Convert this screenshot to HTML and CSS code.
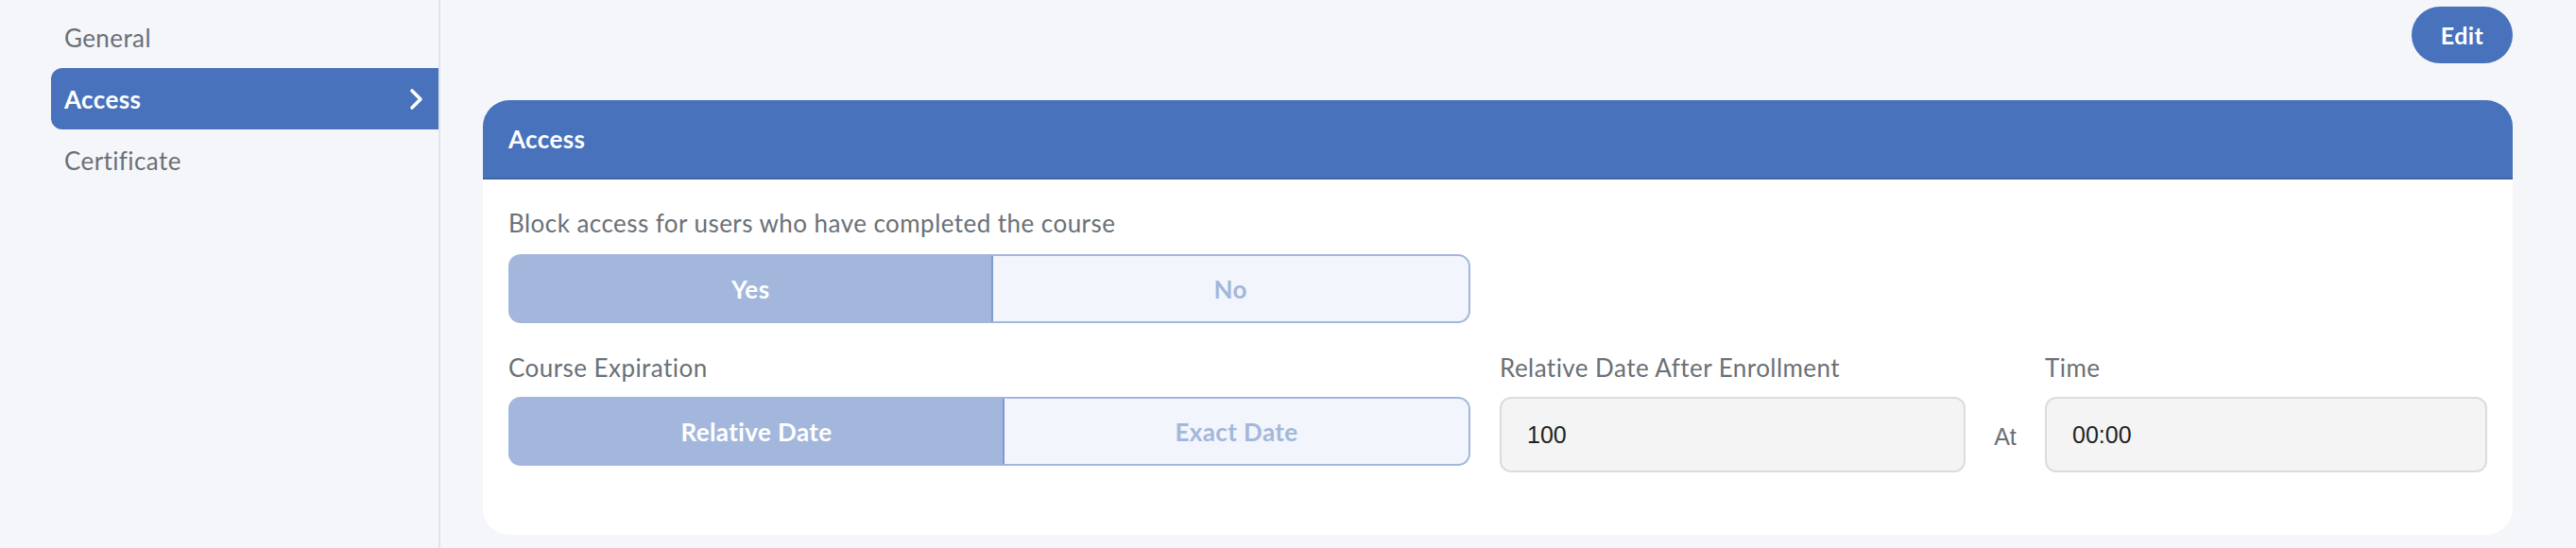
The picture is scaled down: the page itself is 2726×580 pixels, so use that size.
FILE: index.html
```html
<!DOCTYPE html>
<html lang="en">
<head>
<meta charset="utf-8">
<title>Course settings - Access</title>
<link rel="stylesheet" href="styles.css">
</head>
<body>
<div class="app">
  <aside class="sidebar">
    <nav class="menu">
      <a class="menu-item">General</a>
      <a class="menu-item active"><span>Access</span>
        <svg class="chev" width="18" height="24" viewBox="0 0 18 24"><path d="M4 3 L13 12 L4 21" fill="none" stroke="#fff" stroke-width="3.6" stroke-linecap="round" stroke-linejoin="round"/></svg>
      </a>
      <a class="menu-item">Certificate</a>
    </nav>
  </aside>
  <main class="main">
    <div class="toolbar"><button class="btn-edit">Edit</button></div>
    <section class="card">
      <header class="card-header">Access</header>
      <div class="card-body">
        <div class="field field-block">
          <label class="label">Block access for users who have completed the course</label>
          <div class="segmented">
            <button class="seg active">Yes</button>
            <button class="seg">No</button>
          </div>
        </div>
        <div class="row">
          <div class="field col-exp">
            <label class="label">Course Expiration</label>
            <div class="segmented">
              <button class="seg active">Relative Date</button>
              <button class="seg">Exact Date</button>
            </div>
          </div>
          <div class="field col-rel">
            <label class="label">Relative Date After Enrollment</label>
            <div class="input">100</div>
          </div>
          <div class="at">At</div>
          <div class="field col-time">
            <label class="label">Time</label>
            <div class="input">00:00</div>
          </div>
        </div>
      </div>
    </section>
  </main>
</div>
</body>
</html>
```
FILE: styles.css
```css
* { box-sizing: border-box; }
html, body { margin: 0; padding: 0; }
body {
  background: #f5f6fa;
  font-family: Lato, "Noto Sans", sans-serif;
  color: #6b7076;
}
.app {
  display: flex;
  height: 580px;
}
.sidebar {
  width: 466px;
  flex: none;
  border-right: 2px solid #e2e4e9;
  padding: 7px 0 0 54px;
}
.menu { display: flex; flex-direction: column; }
.menu-item {
  height: 65px;
  display: flex;
  align-items: center;
  justify-content: space-between;
  padding: 0 14px 0 14px;
  font-size: 26px;
  letter-spacing: 0.4px;
  color: #6b7076;
  border-radius: 12px 0 0 12px;
}
.menu-item.active {
  background: #4872bb;
  color: #fff;
  font-weight: 700;
}
.chev { display: block; }
.main {
  flex: 1;
  padding: 7px 67px 14px 45px;
  display: flex;
  flex-direction: column;
}
.toolbar {
  display: flex;
  justify-content: flex-end;
}
.btn-edit {
  width: 107px;
  height: 60px;
  border: none;
  border-radius: 30px;
  background: #4872bb;
  color: #fff;
  font-family: Lato, sans-serif;
  font-size: 25px;
  font-weight: 700;
  letter-spacing: 0.4px;
  padding: 0;
}
.card {
  margin-top: 39px;
  background: #fff;
  border-radius: 28px;
  overflow: hidden;
  height: 460px;
}
.card-header {
  height: 84px;
  background: #4872bb;
  border-bottom: 2px solid #3f65a6;
  color: #fff;
  font-weight: 700;
  font-size: 26px;
  letter-spacing: 0.4px;
  display: flex;
  align-items: center;
  padding-left: 27px;
}
.card-body {
  padding: 30px 27px 0 27px;
}
.label {
  display: block;
  font-size: 26px;
  line-height: 32px;
  letter-spacing: 0.45px;
  color: #6b7076;
  white-space: nowrap;
}
.field-block { margin-bottom: 31px; }
.field-block .label { margin-bottom: 17px; }
.row .label { margin-bottom: 15px; }
.segmented {
  display: flex;
  width: 1018px;
  height: 73px;
}
.seg {
  flex: 1 1 auto;
  font-family: Lato, sans-serif;
  font-size: 26px;
  font-weight: 700;
  letter-spacing: 0.4px;
  border: 2px solid #a3b7dc;
  background: #f2f5fb;
  color: #a3b7dc;
  padding: 0 20px;
}
.seg:first-child {
  border-radius: 13px 0 0 13px;
  border-right: none;
}
.seg:last-child {
  border-radius: 0 13px 13px 0;
  border-left: 2px solid #7e9bcf;
}
.seg.active {
  background: #a3b7dc;
  color: #fff;
}
.row {
  display: flex;
  align-items: flex-start;
}
.col-exp { width: 1018px; flex: none; margin-right: 31px; }
.col-rel { width: 493px; flex: none; }
.col-time { flex: 1; }
.at {
  width: 84px;
  flex: none;
  align-self: flex-end;
  height: 80px;
  display: flex;
  align-items: center;
  justify-content: center;
  font-family: "Liberation Sans", Arial, sans-serif;
  font-size: 25px;
  color: #6b7076;
  padding-top: 4px;
}
.input {
  height: 80px;
  border: 2px solid #d8dde1;
  border-radius: 12px;
  background: #f4f4f4;
  padding-left: 27px;
  display: flex;
  align-items: center;
  font-family: "Liberation Sans", Arial, sans-serif;
  font-size: 25px;
  color: #222;
}
```
